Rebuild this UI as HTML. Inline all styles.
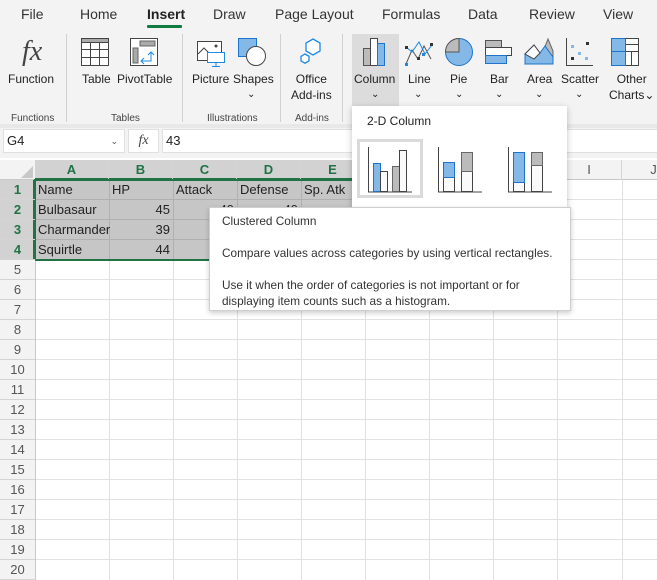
<!DOCTYPE html>
<html><head><meta charset="utf-8"><style>
*{margin:0;padding:0;box-sizing:border-box}
body{width:657px;height:579px;overflow:hidden;background:#fff;font-family:"Liberation Sans",sans-serif;position:relative;color:#222}
.a{position:absolute}
.tab{position:absolute;top:6px;font-size:14px;color:#333}
.lbl{position:absolute;font-size:12px;color:#222;text-align:center;line-height:16px}
.grp{position:absolute;top:113px;font-size:10px;color:#444}
.sep{position:absolute;top:34px;width:1px;height:88px;background:#d0d0d0}
.ch{position:absolute;top:160px;height:20px;font-size:13px;font-weight:bold;text-align:center;line-height:20px;border-right:1px solid #d4d4d4}
.rh{position:absolute;left:0;width:35px;height:20px;font-size:13px;text-align:center;line-height:20px;border-bottom:1px solid #d4d4d4;background:#f3f3f3;color:#555}
.cell{position:absolute;font-size:13px;line-height:20px;height:20px;padding:0 3px;white-space:nowrap}
</style></head><body>
<div class="a" style="left:0;top:0;width:657px;height:158px;background:#f3f3f3"></div>
<div class="a" style="left:0;top:124px;width:657px;height:4px;background:#e8e8e8"></div>
<div class="tab" style="left:21px">File</div>
<div class="tab" style="left:80px">Home</div>
<div class="tab" style="left:147px;font-weight:bold;color:#222">Insert</div>
<div class="a" style="left:147px;top:25px;width:35px;height:3px;background:#107c41;border-radius:1px"></div>
<div class="tab" style="left:213px">Draw</div>
<div class="tab" style="left:275px">Page Layout</div>
<div class="tab" style="left:382px">Formulas</div>
<div class="tab" style="left:468px">Data</div>
<div class="tab" style="left:529px">Review</div>
<div class="tab" style="left:603px">View</div>

<div class="a" style="left:22px;top:36px;font-family:'Liberation Serif',serif;font-style:italic;font-size:28px;color:#444">fx</div>
<div class="lbl" style="left:8px;top:71px">Function</div>
<div class="grp" style="left:11px">Functions</div>
<div class="sep" style="left:66px"></div>
<svg class="a" style="left:80px;top:37px" width="30" height="30"><rect x="1.5" y="1.5" width="27" height="27" fill="#fff" stroke="#444"/><rect x="1.5" y="1.5" width="27" height="4" fill="#aaa" stroke="#444"/><path d="M10.5 5v24M19.5 5v24M2 12.5h27M2 20.5h27" stroke="#444"/></svg>
<div class="lbl" style="left:82px;top:71px">Table</div>
<svg class="a" style="left:129px;top:37px" width="30" height="30"><rect x="1.5" y="1.5" width="27" height="27" fill="#fff" stroke="#444"/><rect x="11" y="4" width="15" height="5" fill="#aaa" stroke="#666"/><rect x="4" y="11" width="5" height="15" fill="#aaa" stroke="#666"/><path d="M13 24h9v-9M19 18l3-3 3 3M15 21l-3 3 3 3" stroke="#1e88e5" fill="none"/></svg>
<div class="lbl" style="left:117px;top:71px">PivotTable</div>
<div class="grp" style="left:111px">Tables</div>
<div class="sep" style="left:182px"></div>
<svg class="a" style="left:196px;top:40px" width="32" height="28"><rect x="1.5" y="1.5" width="24" height="19" fill="#fff" stroke="#444"/><path d="M2 14l6-6 6 6" stroke="#444" fill="none"/><circle cx="20" cy="6" r="1.5" fill="#444"/><rect x="11.5" y="12.5" width="17" height="10" fill="#fff" stroke="#1e88e5"/><path d="M20 23v3M16 26.5h8" stroke="#1e88e5"/></svg>
<div class="lbl" style="left:192px;top:71px">Picture</div>
<svg class="a" style="left:237px;top:37px" width="32" height="30"><rect x="1.5" y="1.5" width="18" height="18" fill="#84b8e6" stroke="#1e74c8"/><circle cx="19" cy="19" r="9.5" fill="#fff" stroke="#444"/></svg>
<div class="lbl" style="left:233px;top:71px">Shapes</div>
<div class="lbl" style="left:247px;top:87px;font-size:10px">&#8964;</div>
<div class="grp" style="left:207px">Illustrations</div>
<div class="sep" style="left:280px"></div>
<svg class="a" style="left:297px;top:36px" width="32" height="32"><path d="M16 3l7 4v8l-7 4-7-4V7z" fill="#fff" stroke="#1e88e5" stroke-width="1.3"/><path d="M8 18l4 2.3v4.6L8 27.2 4 25v-4.6z" fill="#fff" stroke="#1e88e5" stroke-width="1.3"/></svg>
<div class="lbl" style="left:291px;top:71px">Office<br>Add-ins</div>
<div class="grp" style="left:295px">Add-ins</div>
<div class="sep" style="left:342px"></div>
<div class="a" style="left:352px;top:34px;width:47px;height:72px;background:#dcdcdc"></div>
<svg class="a" style="left:362px;top:37px" width="28" height="30"><rect x="1.5" y="11.5" width="7" height="17" fill="#bbb" stroke="#555"/><rect x="8.5" y="1.5" width="7" height="27" fill="#fff" stroke="#444"/><rect x="15.5" y="6.5" width="7" height="22" fill="#84b8e6" stroke="#1e74c8"/></svg>
<div class="lbl" style="left:354px;top:71px">Column</div>
<div class="lbl" style="left:371px;top:87px;font-size:10px">&#8964;</div>
<svg class="a" style="left:404px;top:38px" width="30" height="28"><path d="M2 26L8 12l6 9 6-13 7 13" stroke="#555" fill="none"/><path d="M2 9l6 5 7-10 6 12 7-9" stroke="#1e88e5" fill="none"/><g fill="#333"><rect x="1" y="8" width="3" height="3"/><rect x="13" y="19" width="3" height="3"/><rect x="26" y="5" width="3" height="3"/></g><g fill="#1e88e5"><rect x="1" y="25" width="3" height="3"/><rect x="18" y="15" width="3" height="3"/></g></svg>
<div class="lbl" style="left:408px;top:71px">Line</div>
<div class="lbl" style="left:414px;top:87px;font-size:10px">&#8964;</div>
<svg class="a" style="left:444px;top:37px" width="30" height="30"><circle cx="15" cy="15" r="13.5" fill="#84b8e6" stroke="#1e74c8"/><path d="M15 15V1.5A13.5 13.5 0 0 0 1.5 15z" fill="#bbb" stroke="#555"/></svg>
<div class="lbl" style="left:450px;top:71px">Pie</div>
<div class="lbl" style="left:455px;top:87px;font-size:10px">&#8964;</div>
<svg class="a" style="left:484px;top:39px" width="30" height="26"><rect x="1.5" y="1.5" width="16" height="7" fill="#bbb" stroke="#555"/><rect x="1.5" y="8.5" width="26" height="8" fill="#fff" stroke="#444"/><rect x="1.5" y="16.5" width="21" height="8" fill="#84b8e6" stroke="#1e74c8"/></svg>
<div class="lbl" style="left:490px;top:71px">Bar</div>
<div class="lbl" style="left:495px;top:87px;font-size:10px">&#8964;</div>
<svg class="a" style="left:524px;top:37px" width="30" height="30"><path d="M1 27L10 12 17 20 24 2 29 14v13z" fill="#bbb" stroke="#666"/><path d="M1 27V17L10 8l6 8 5-7 8 11v7z" fill="#84b8e6" stroke="#1e74c8"/><path d="M1 17L10 8l6 8-6 6z" fill="#fff" stroke="#444"/></svg>
<div class="lbl" style="left:527px;top:71px">Area</div>
<div class="lbl" style="left:535px;top:87px;font-size:10px">&#8964;</div>
<svg class="a" style="left:565px;top:37px" width="30" height="30"><path d="M1.5 1v27.5H28" stroke="#444" fill="none"/><g fill="#84b8e6"><rect x="6" y="8" width="3" height="3"/><rect x="13" y="15" width="3" height="3"/><rect x="20" y="20" width="3" height="3"/></g><g fill="#333"><rect x="21" y="5" width="3" height="3"/><rect x="6" y="20" width="3" height="3"/></g></svg>
<div class="lbl" style="left:561px;top:71px">Scatter</div>
<div class="lbl" style="left:575px;top:87px;font-size:10px">&#8964;</div>
<svg class="a" style="left:610px;top:37px" width="30" height="30"><rect x="1.5" y="1.5" width="27" height="27" fill="#fff" stroke="#444"/><rect x="1.5" y="1.5" width="14" height="13" fill="#84b8e6" stroke="#1e74c8"/><rect x="1.5" y="14.5" width="14" height="14" fill="#84b8e6" stroke="#1e74c8"/><path d="M16 7.5h12M16 14.5h12M21.5 15v14" stroke="#444"/></svg>
<div class="lbl" style="left:609px;top:71px">Other<br>Charts&#8964;</div>

<div class="a" style="left:3px;top:129px;width:122px;height:24px;background:#fff;border:1px solid #e0e0e0;font-size:13px;line-height:22px;padding-left:3px">G4<span style="position:absolute;right:6px;font-size:9px;color:#555">&#8964;</span></div>
<div class="a" style="left:128px;top:129px;width:31px;height:24px;background:#fff;border:1px solid #e0e0e0;font-family:'Liberation Serif',serif;font-style:italic;font-size:14px;text-align:center;line-height:22px;color:#444">fx</div>
<div class="a" style="left:162px;top:129px;width:500px;height:24px;background:#fff;border:1px solid #e0e0e0;font-size:13px;line-height:22px;padding-left:3px">43</div>

<div class="a" style="left:0;top:158px;width:657px;height:421px;background:#fff"></div>
<div class="a" style="left:0;top:160px;width:657px;height:20px;background:#f3f3f3;border-bottom:1px solid #c8c8c8"></div>
<svg class="a" style="left:20px;top:165px" width="14" height="14"><path d="M13 1v12H1z" fill="#c8c8c8"/></svg>
<div class="a" style="left:35px;top:160px;width:330px;height:20px;background:#d2d2d2;border-bottom:2px solid #217346"></div>
<div class="ch" style="left:35px;width:74px;color:#217346">A</div>
<div class="ch" style="left:109px;width:64px;color:#217346">B</div>
<div class="ch" style="left:173px;width:64px;color:#217346">C</div>
<div class="ch" style="left:237px;width:64px;color:#217346">D</div>
<div class="ch" style="left:301px;width:64px;color:#217346">E</div>
<div class="ch" style="left:365px;width:64px;color:#555;font-weight:normal">F</div>
<div class="ch" style="left:429px;width:64px;color:#555;font-weight:normal">G</div>
<div class="ch" style="left:493px;width:64px;color:#555;font-weight:normal">H</div>
<div class="ch" style="left:557px;width:65px;color:#555;font-weight:normal">I</div>
<div class="ch" style="left:622px;width:64px;color:#555;font-weight:normal">J</div>
<svg class="a" style="left:0;top:180px" width="657" height="400">
<g stroke="#e1e1e1">
<path d="M109.5 0v400M173.5 0v400M237.5 0v400M301.5 0v400M365.5 0v400M429.5 0v400M493.5 0v400M557.5 0v400M622.5 0v400"/>
<path d="M35 19.5h622M35 39.5h622M35 59.5h622M35 79.5h622M35 99.5h622M35 119.5h622M35 139.5h622M35 159.5h622M35 179.5h622M35 199.5h622M35 219.5h622M35 239.5h622M35 259.5h622M35 279.5h622M35 299.5h622M35 319.5h622M35 339.5h622M35 359.5h622M35 379.5h622"/>
</g>
<path d="M35.5 0v400" stroke="#c8c8c8"/>
</svg>
<div class="a" style="left:35px;top:180px;width:330px;height:80px;background:#c6c6c6"></div>
<svg class="a" style="left:35px;top:180px" width="330" height="80"><g stroke="#b0b0b0"><path d="M74.5 0v80M138.5 0v80M202.5 0v80M266.5 0v80M0 19.5h330M0 39.5h330M0 59.5h330"/></g></svg>
<div class="a" style="left:34px;top:179px;width:332px;height:82px;border:2px solid #217346"></div>
<div class="a" style="left:0;top:180px;width:35px;height:80px;background:#d2d2d2;border-right:2px solid #217346"></div>
<div class="rh" style="top:180px;background:none;color:#217346;font-weight:bold">1</div>
<div class="rh" style="top:200px;background:none;color:#217346;font-weight:bold">2</div>
<div class="rh" style="top:220px;background:none;color:#217346;font-weight:bold">3</div>
<div class="rh" style="top:240px;background:none;color:#217346;font-weight:bold">4</div>
<div class="rh" style="top:260px">5</div><div class="rh" style="top:280px">6</div><div class="rh" style="top:300px">7</div><div class="rh" style="top:320px">8</div><div class="rh" style="top:340px">9</div><div class="rh" style="top:360px">10</div><div class="rh" style="top:380px">11</div><div class="rh" style="top:400px">12</div><div class="rh" style="top:420px">13</div><div class="rh" style="top:440px">14</div><div class="rh" style="top:460px">15</div><div class="rh" style="top:480px">16</div><div class="rh" style="top:500px">17</div><div class="rh" style="top:520px">18</div><div class="rh" style="top:540px">19</div><div class="rh" style="top:560px">20</div>
<div class="cell" style="left:35px;top:180px">Name</div>
<div class="cell" style="left:109px;top:180px">HP</div>
<div class="cell" style="left:173px;top:180px">Attack</div>
<div class="cell" style="left:237px;top:180px">Defense</div>
<div class="cell" style="left:301px;top:180px">Sp. Atk</div>
<div class="cell" style="left:35px;top:200px">Bulbasaur</div>
<div class="cell" style="left:35px;top:220px">Charmander</div>
<div class="cell" style="left:35px;top:240px">Squirtle</div>
<div class="cell" style="left:109px;top:200px;width:64px;text-align:right">45</div>
<div class="cell" style="left:109px;top:220px;width:64px;text-align:right">39</div>
<div class="cell" style="left:109px;top:240px;width:64px;text-align:right">44</div>
<div class="cell" style="left:173px;top:200px;width:64px;text-align:right">49</div>
<div class="cell" style="left:237px;top:200px;width:64px;text-align:right">49</div>

<div class="a" style="left:352px;top:106px;width:215px;height:102px;background:#fff;box-shadow:0 2px 6px rgba(0,0,0,.25)"></div>
<div class="a" style="left:367px;top:114px;font-size:12px;color:#222">2-D Column</div>
<div class="a" style="left:357px;top:139px;width:66px;height:59px;border:3px solid #dadada"></div>
<svg class="a" style="left:365px;top:145px" width="50" height="48"><path d="M3.5 2v45H47" stroke="#444" fill="none"/><rect x="8.5" y="18.5" width="7" height="28" fill="#84b8e6" stroke="#1e74c8"/><rect x="15.5" y="26.5" width="7" height="20" fill="#fafafa" stroke="#444"/><rect x="27.5" y="21.5" width="7" height="25" fill="#bbb" stroke="#666"/><rect x="34.5" y="5.5" width="7" height="41" fill="#fafafa" stroke="#444"/></svg>
<svg class="a" style="left:435px;top:145px" width="50" height="48"><path d="M3.5 2v45H47" stroke="#444" fill="none"/><rect x="8.5" y="32.5" width="11" height="14" fill="#fafafa" stroke="#444"/><rect x="8.5" y="17.5" width="11" height="15" fill="#84b8e6" stroke="#1e74c8"/><rect x="26.5" y="26.5" width="11" height="20" fill="#fafafa" stroke="#444"/><rect x="26.5" y="7.5" width="11" height="19" fill="#bbb" stroke="#666"/></svg>
<svg class="a" style="left:505px;top:145px" width="50" height="48"><path d="M3.5 2v45H47" stroke="#444" fill="none"/><rect x="8.5" y="37.5" width="11" height="9" fill="#fafafa" stroke="#444"/><rect x="8.5" y="7.5" width="11" height="30" fill="#84b8e6" stroke="#1e74c8"/><rect x="26.5" y="20.5" width="11" height="26" fill="#fafafa" stroke="#444"/><rect x="26.5" y="7.5" width="11" height="13" fill="#bbb" stroke="#666"/></svg>

<div class="a" style="left:209px;top:207px;width:362px;height:104px;background:#fff;border:1px solid #cfcfcf;box-shadow:0 2px 5px rgba(0,0,0,.2);font-size:11.8px;color:#333;padding:5px 0 0 12px;line-height:16px">
<div>Clustered Column</div>
<div style="margin-top:16px">Compare values across categories by using vertical rectangles.</div>
<div style="margin-top:16px">Use it when the order of categories is not important or for<br>displaying item counts such as a histogram.</div>
</div>
</body></html>
